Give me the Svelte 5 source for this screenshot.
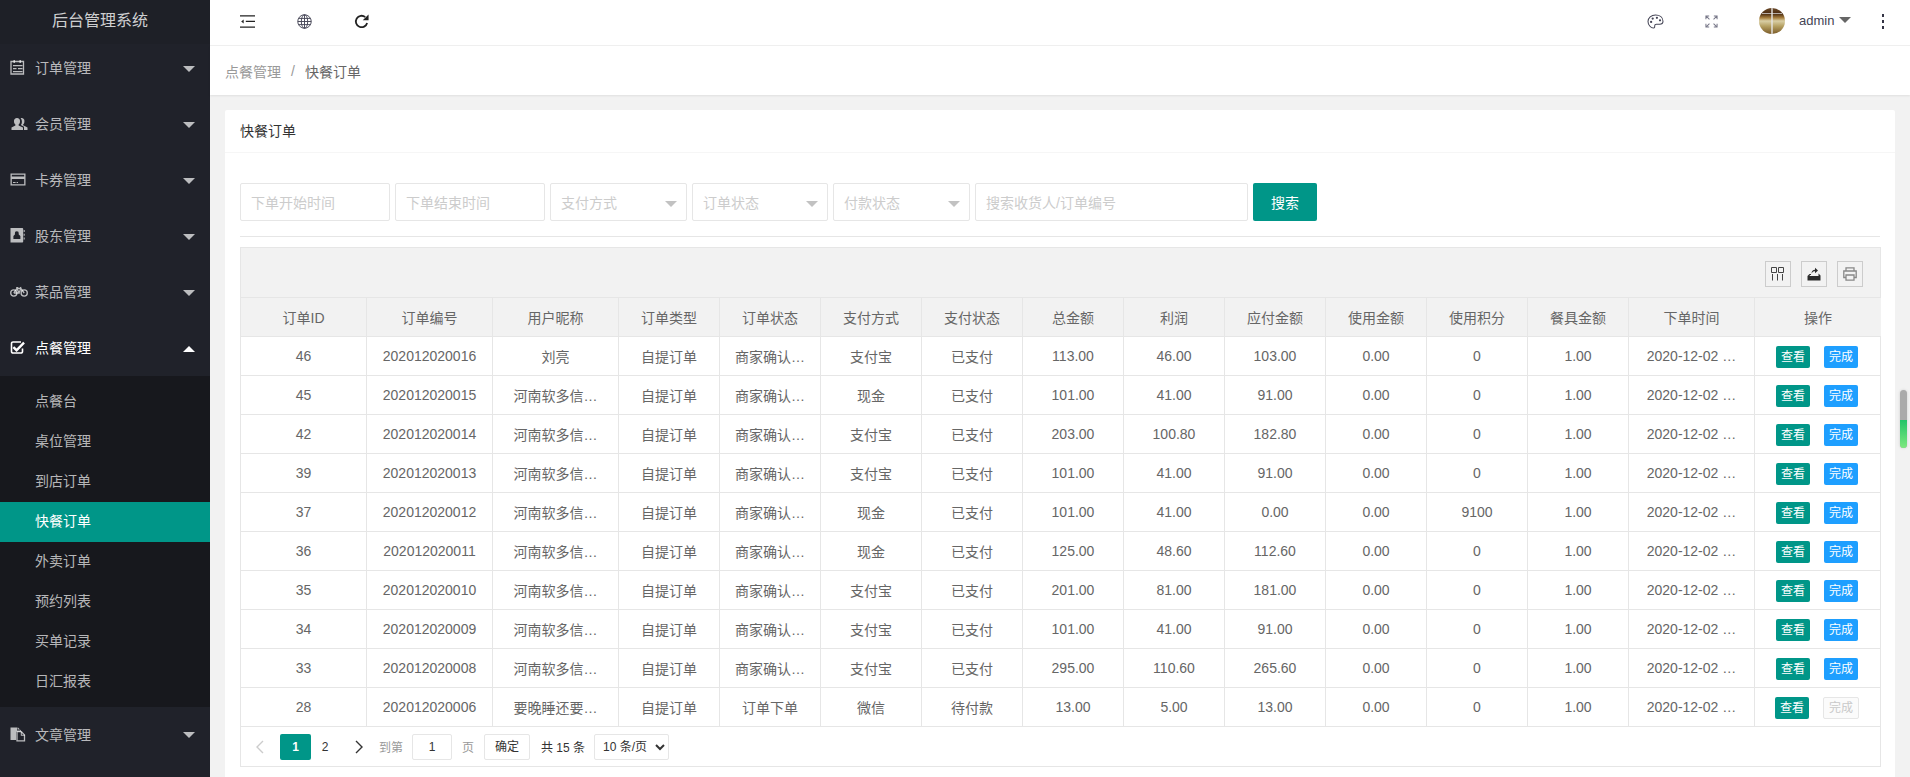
<script>
  const menu1 = [
    { label: '订单管理', icon: 'order' },
    { label: '会员管理', icon: 'users' },
    { label: '卡券管理', icon: 'card' },
    { label: '股东管理', icon: 'contact' },
    { label: '菜品管理', icon: 'bike' }
  ];
  const subs = ['点餐台', '桌位管理', '到店订单', '快餐订单', '外卖订单', '预约列表', '买单记录', '日汇报表'];
  const cols = ['订单ID','订单编号','用户昵称','订单类型','订单状态','支付方式','支付状态','总金额','利润','应付金额','使用金额','使用积分','餐具金额','下单时间','操作'];
  const s = '商家确认…';
  const rows = [
    [46,'202012020016','刘亮','自提订单',s,'支付宝','已支付','113.00','46.00','103.00','0.00','0','1.00'],
    [45,'202012020015','河南软多信…','自提订单',s,'现金','已支付','101.00','41.00','91.00','0.00','0','1.00'],
    [42,'202012020014','河南软多信…','自提订单',s,'支付宝','已支付','203.00','100.80','182.80','0.00','0','1.00'],
    [39,'202012020013','河南软多信…','自提订单',s,'支付宝','已支付','101.00','41.00','91.00','0.00','0','1.00'],
    [37,'202012020012','河南软多信…','自提订单',s,'现金','已支付','101.00','41.00','0.00','0.00','9100','1.00'],
    [36,'202012020011','河南软多信…','自提订单',s,'现金','已支付','125.00','48.60','112.60','0.00','0','1.00'],
    [35,'202012020010','河南软多信…','自提订单',s,'支付宝','已支付','201.00','81.00','181.00','0.00','0','1.00'],
    [34,'202012020009','河南软多信…','自提订单',s,'支付宝','已支付','101.00','41.00','91.00','0.00','0','1.00'],
    [33,'202012020008','河南软多信…','自提订单',s,'支付宝','已支付','295.00','110.60','265.60','0.00','0','1.00'],
    [28,'202012020006','要晚睡还要…','自提订单','订单下单','微信','待付款','13.00','5.00','13.00','0.00','0','1.00']
  ];
</script>

{#snippet sideIcon(name)}
  <svg class="side-icon" class:wide={name === 'users' || name === 'bike'} viewBox={name === 'users' || name === 'bike' ? '0 0 18 16' : '0 0 16 16'} aria-hidden="true">
    {#if name === 'order'}
      <path fill="none" stroke="currentColor" stroke-width="1.300" d="M1 2.500h12.500v12.500H1z"/>
      <path fill="currentColor" d="M3.500 1h1.400v3H3.500zM9.500 1h1.400v3H9.500zM3 6h9.500v1.200H3zM3 9h3.500v1.200H3zM8 9h4.500v1.200H8zM3 12h9.500v1.200H3z"/>
    {:else if name === 'users'}
      <path fill="currentColor" d="M7 3a3 3 0 0 1 3 3.400c0 1.300-.6 2.500-1.400 3.100v.9l4.400 2v2.600H1.500v-2.600l3.900-2v-.9C4.600 8.900 4 7.700 4 6.400A3 3 0 0 1 7 3z"/>
      <path fill="currentColor" d="M11.500 3a2.900 2.900 0 0 1 2.900 3.400c0 1.200-.5 2.400-1.300 3v.9l4.400 2.100V15H14v-3.300l-3.100-1.600c.6-.9 1-2 1-3.200 0-1.500-.4-2.800-1.300-3.700.3-.1.600-.2.900-.2z"/>
    {:else if name === 'card'}
      <path fill="currentColor" fill-rule="evenodd" d="M.5 2.500h15v12H.5zM1.800 3.800v1.800h12.400V3.800zM1.800 8v5.200h12.400V8z"/>
      <path fill="currentColor" d="M3 11h2.600v1H3zM6.600 11h1.400v1H6.600z"/>
    {:else if name === 'contact'}
      <path fill="currentColor" fill-rule="evenodd" d="M.5 1h11.800a.9.9 0 0 1 .9.900v12.700a.9.900 0 0 1-.9.900H.5zM6.800 4.200a1.900 1.900 0 0 0-1.900 2.200v1L3.400 9v3h7V9L8.700 7.400v-1a1.900 1.900 0 0 0-1.900-2.200z"/>
      <path fill="currentColor" d="M13.700 3h1v2h-1zM13.700 6.800h1v2h-1zM13.700 10.600h1v2h-1z"/>
    {:else if name === 'bike'}
      <g fill="none" stroke="currentColor" stroke-width="1.300">
        <circle cx="3.800" cy="10" r="3.100"/><circle cx="14.200" cy="10" r="3.100"/>
        <path d="M3.800 10 7 5.500h3.800L14.200 10M6.200 4.600h2M10.500 4l.4 1.700M7 5.500 9 10H3.800M10.800 5.800 9 10"/>
      </g>
    {:else if name === 'check'}
      <path fill="none" stroke="currentColor" stroke-width="1.600" d="M12.500 9.500v3a1.500 1.500 0 0 1-1.500 1.500H3a1.500 1.500 0 0 1-1.500-1.500v-8A1.500 1.500 0 0 1 3 3h8"/>
      <path fill="currentColor" d="M4.200 7.200 6.600 9.600l6.600-6.800 1.700 1.700-8.300 8.500-4.100-4.100z"/>
    {:else if name === 'docs'}
      <path fill="currentColor" d="M.5 1.500H7v3h3v-1l.1.100H7.500V1.500H8l3 3v1H6v8.500H.5z"/>
      <path fill="none" stroke="currentColor" stroke-width="1.300" d="M7 5.700h4.300l3.200 3.200v6H7z"/>
      <path fill="currentColor" d="M10.800 5.700h1v3h3v1h-4z"/>
    {/if}
  </svg>
{/snippet}

{#snippet caret(up = false)}
  <i class="caret" class:up></i>
{/snippet}

<div class="app">
  <aside class="side">
    <div class="logo">后台管理系统</div>
    <nav>
      {#each menu1 as m}
        <div class="nav-item">{@render sideIcon(m.icon)}<span>{m.label}</span>{@render caret()}</div>
      {/each}
      <div class="nav-item open">{@render sideIcon('check')}<span>点餐管理</span>{@render caret(true)}</div>
      <div class="subs">
        {#each subs as sub}
          <div class="sub" class:active={sub === '快餐订单'}>{sub}</div>
        {/each}
      </div>
      <div class="nav-item tail">{@render sideIcon('docs')}<span>文章管理</span>{@render caret()}</div>
    </nav>
  </aside>

  <div class="main">
    <header class="top">
      <div class="top-left">
        <svg class="ti menu" viewBox="0 0 15.500 13.100" aria-hidden="true">
          <path fill="#222" d="M0 0h15.500v1.300H0zM6 5.800h9.500v1.300H6zM0 11.800h15.500v1.300H0zM3.800 4.500v4L1.200 6.500z"/>
        </svg>
        <svg class="ti globe" viewBox="0 0 16 16" aria-hidden="true">
          <g fill="none" stroke="#445" stroke-width="1">
            <circle cx="8" cy="8" r="7.200"/><ellipse cx="8" cy="8" rx="3.400" ry="7.200"/>
            <path d="M8 .8v14.400M.8 8h14.400M1.800 4.700h12.400M1.800 11.300h12.400"/>
          </g>
        </svg>
        <svg class="ti" viewBox="0 0 16 16" aria-hidden="true">
          <path fill="none" stroke="#222" stroke-width="1.900" d="M14 9.500A6.100 6.100 0 1 1 12 3.300"/>
          <path fill="#222" d="M15.500.5v6.200H9.300z"/>
        </svg>
      </div>
      <div class="top-right">
        <svg class="palette" viewBox="0 0 18 16" aria-hidden="true">
          <path fill="none" stroke="#445" stroke-width="1.100" d="M9 1C4.500 1 1 4 1 8c0 3.500 3 7 5.800 7 1.700 0 1.300-1.600 1.300-2.300 0-1 .7-1.700 1.900-1.700h3.400c2 0 3.600-1 3.600-3.200C17 3.500 13.500 1 9 1z"/>
          <circle cx="4.300" cy="8.500" r="1.200" fill="#445"/><circle cx="6" cy="4.800" r="1.200" fill="#445"/><circle cx="10.500" cy="4" r="1.200" fill="#445"/><circle cx="13.800" cy="6.700" r="1.200" fill="#445"/>
        </svg>
        <svg class="expand" viewBox="0 0 14 14" aria-hidden="true">
          <path fill="none" stroke="#778" stroke-width="1.100" d="M1 4.500V1h3.500M1 1l3.800 3.800M13 4.500V1H9.500M13 1 9.200 4.800M1 9.500V13h3.500M1 13l3.800-3.800M13 9.500V13H9.500M13 13 9.200 9.200"/>
        </svg>
        <div class="avatar"><i class="v"></i><i class="h"></i></div>
        <span class="uname">admin</span>
        <i class="ucaret"></i>
        <div class="dots"><i></i><i></i><i></i></div>
      </div>
    </header>

    <div class="crumb"><span class="c1">点餐管理</span><span class="sep">/</span><span class="c2">快餐订单</span></div>

    <div class="body">
      <section class="card">
        <div class="card-h">快餐订单</div>
        <div class="card-b">
          <div class="filters">
            <div class="inp w150"><span>下单开始时间</span></div>
            <div class="inp w150"><span>下单结束时间</span></div>
            <div class="inp sel"><span>支付方式</span><i></i></div>
            <div class="inp sel narrow"><span>订单状态</span><i></i></div>
            <div class="inp sel"><span>付款状态</span><i></i></div>
            <div class="inp wide"><span>搜索收货人/订单编号</span></div>
            <button class="search">搜索</button>
          </div>
          <div class="divider"></div>
          <div class="tbl">
            <div class="toolbar">
              <div class="tool">
                <svg viewBox="0 0 14 14" aria-hidden="true"><path fill="none" stroke="#444" d="M.5.500h5v5h-5zM7.500.500h5v5h-5zM1.500 7v6.500M6.500 7v6.500M11.500 7v6.500"/></svg>
              </div>
              <div class="tool">
                <svg viewBox="0 0 14 14" aria-hidden="true"><path fill="#2b2b2b" d="M.5 9 2.500 7H4v1H3l-.5 1h9V6.500l2 2v5H.5z"/><path fill="#2b2b2b" d="M4.500 6.500c0-2.500 1.500-3.800 3.500-3.800V.8l3 2.700-3 2.700V4.300C6.500 4.300 5.500 4.800 4.500 6.500z"/></svg>
              </div>
              <div class="tool">
                <svg viewBox="0 0 14 14" aria-hidden="true"><path fill="none" stroke="#888" stroke-width="1.300" d="M3 4V.8h8V4M3 10.500H.8V4h12.400v6.500H11M3 8h8v5.200H3z"/></svg>
              </div>
            </div>
            <table>
              <colgroup>
                {#each cols as c, i}
                  <col class={i < 3 || i > 12 ? 'cw' : 'cn'} />
                {/each}
              </colgroup>
              <thead>
                <tr>{#each cols as c}<th>{c}</th>{/each}</tr>
              </thead>
              <tbody>
                {#each rows as r, ri}
                  <tr>
                    {#each r as v}<td>{v}</td>{/each}
                    <td>2020-12-02 …</td>
                    <td class="ops" class:last={ri === 9}>
                      <span class="btn teal">查看</span><span class="btn" class:blue={ri !== 9} class:off={ri === 9}>完成</span>
                    </td>
                  </tr>
                {/each}
              </tbody>
            </table>
            <div class="pager">
              <svg class="chev" viewBox="0 0 10 14" aria-hidden="true"><path fill="none" stroke="#ccc" stroke-width="1.400" d="M8 1 2 7l6 6"/></svg>
              <span class="pg cur">1</span>
              <span class="pg two">2</span>
              <svg class="chev next" viewBox="0 0 10 14" aria-hidden="true"><path fill="none" stroke="#333" stroke-width="1.400" d="m2 1 6 6-6 6"/></svg>
              <span class="lbl first">到第</span>
              <span class="num">1</span>
              <span class="lbl">页</span>
              <span class="ok">确定</span>
              <span class="total">共 15 条</span>
              <select class="limit"><option>10 条/页</option></select>
            </div>
          </div>
        </div>
      </section>
    </div>
  </div>

  <div class="scroll"><i></i></div>
</div>

<style>
  :global(body) { margin: 0; overflow: hidden; }
  :global(#app) { font-family: "Liberation Sans", "Noto Sans CJK SC", sans-serif; }
  .app { display: flex; width: 1910px; height: 777px; overflow: hidden; position: relative; font-size: 14px; color: #666; background: #f2f2f2; }

  .side { width: 210px; flex: none; background: linear-gradient(#1e2027 44px, #20222a 44px); color: rgba(255,255,255,.7); }
  .logo { height: 40px; line-height: 41px; text-align: center; font-size: 16px; color: rgba(255,255,255,.8); padding-right: 10px; }
  .nav-item { height: 56px; box-sizing: border-box; padding: 0 0 2px 10px; display: flex; align-items: center; position: relative; }
  .side-icon { width: 16px; height: 16px; flex: none; margin-right: 9px; }
  .side-icon.wide { width: 18px; margin-right: 7px; }
  .nav-item.open { color: #fff; }
  .caret { position: absolute; left: 183px; top: 26px; width: 0; height: 0; border: 6px solid transparent; border-top-color: rgba(255,255,255,.7); border-bottom: 0; }
  .caret.up { border-top: 0; border-bottom: 6px solid #fff; }
  .tail .caret { top: 25px; }
  .subs { background: #17181d; padding: 6px 0 5px; }
  .sub { height: 40px; line-height: 38px; padding-left: 35px; }
  .sub.active { background: #009688; color: #fff; }

  .main { width: 1700px; flex: none; display: flex; flex-direction: column; }
  .top { height: 46px; box-sizing: border-box; background: #fff; border-bottom: 1px solid #f0f0f0; display: flex; align-items: center; justify-content: space-between; flex: none; }
  .top-left { display: flex; align-items: center; gap: 42px; padding: 0 0 3px 30px; }
  .ti { width: 15px; height: 15px; display: block; }
  .ti.menu { height: 13px; }
  .top-right { display: flex; align-items: center; height: 100%; box-sizing: border-box; padding-bottom: 3px; }
  .palette { width: 17px; height: 15px; }
  .expand { width: 13px; height: 13px; margin-left: 41px; }
  .avatar { width: 26px; height: 26px; border-radius: 50%; margin-left: 41px; position: relative; overflow: hidden; background: linear-gradient(#6b4a2a 0, #4a2a10 22%, #a8803f 38%, #d9cfa6 50%, #b5a062 70%, #7a5a28 100%); }
  .avatar i { position: absolute; background: rgba(230,230,230,.7); }
  .avatar .v { left: 12px; top: 0; bottom: 0; width: 2px; }
  .avatar .h { left: 3px; right: 3px; top: 5px; height: 1px; }
  .uname { margin: -2px 0 0 14px; font-size: 13px; color: #445; width: 34px; }
  .ucaret { width: 0; height: 0; border: 6px solid transparent; border-top-color: #666; border-bottom: 0; margin: -3px 0 0 6px; }
  .dots { margin: 0 26px 0 31px; display: flex; flex-direction: column; gap: 3px; }
  .dots i { width: 2px; height: 3px; background: #334; }

  .crumb { height: 49px; flex: none; box-sizing: border-box; background: #fff; box-shadow: 0 1px 2px rgba(0,0,0,.08); display: flex; align-items: center; padding-left: 15px; }
  .c1 { color: #999; }
  .sep { color: #999; margin: 0 10px; }
  .body { padding: 15px 0 0 15px; flex: 1; min-height: 0; }
  .card { background: #fff; width: 1670px; height: 700px; border-radius: 2px; }
  .card-h { height: 42px; box-sizing: content-box; line-height: 43px; padding-left: 15px; border-bottom: 1px solid #f6f6f6; color: #333; font-size: 14px; }
  .card-b { padding: 30px 15px 0; }

  .filters { display: flex; gap: 5px; }
  .inp { height: 38px; box-sizing: border-box; border: 1px solid #e6e6e6; border-radius: 2px; padding-left: 10px; display: flex; align-items: center; color: #ccc; position: relative; }
  .w150 { width: 150px; }
  .sel { width: 137px; }
  .sel.narrow { width: 136px; }
  .sel i { position: absolute; right: 9px; top: 17px; width: 0; height: 0; border: 6px solid transparent; border-top-color: #c2c2c2; border-bottom: 0; }
  .wide { width: 273px; }
  .search { height: 38px; width: 64px; border: 0; padding: 0; border-radius: 2px; background: #009688; color: #fff; font: inherit; }
  .divider { height: 1px; background: #e6e6e6; margin: 15px 0 10px; }

  .tbl { border: 1px solid #e6e6e6; width: 1639px; box-sizing: content-box; }
  .toolbar { height: 49px; box-sizing: border-box; background: #f2f2f2; display: flex; justify-content: flex-end; align-items: flex-start; gap: 10px; padding: 13px 17px 0 0; }
  .tool { width: 26px; height: 26px; box-sizing: border-box; border: 1px solid #ccc; display: flex; align-items: center; justify-content: center; }
  .tool svg { width: 14px; height: 14px; }

  table { border-collapse: separate; border-spacing: 0; table-layout: fixed; width: 1639px; }
  .cw { width: 126px; }
  .cn { width: 101px; }
  th, td { height: 39px; padding: 0 5px; box-sizing: border-box; border-top: 1px solid #e6e6e6; border-right: 1px solid #e6e6e6; font-weight: 400; color: #666; font-size: 14px; text-align: center; white-space: nowrap; overflow: hidden; }
  th { background: #f2f2f2; }
  th:last-child, td:last-child { border-right: 0; }
  td.ops { padding: 1px 0 0 21px; text-align: left; }
  td.ops.last { padding-left: 20px; }
  .btn { display: inline-block; width: 34px; height: 22px; line-height: 22px; border-radius: 2px; font-size: 12px; text-align: center; color: #fff; vertical-align: middle; }
  .btn + .btn { margin-left: 14px; }
  .teal { background: #009688; }
  .blue { background: #1e9fff; }
  .off { background: #fbfbfb; border: 1px solid #e6e6e6; color: #c9c9c9; box-sizing: border-box; width: 36px; line-height: 20px; }

  .pager { height: 40px; box-sizing: border-box; border-top: 1px solid #e6e6e6; display: flex; align-items: center; padding-left: 14px; font-size: 12px; color: #333; }
  .chev { width: 10px; height: 14px; flex: none; }
  .next { margin-left: 15px; }
  .pg { height: 26px; line-height: 26px; text-align: center; }
  .pg.two { width: 28px; }
  .pg.cur { width: 31px; background: #009688; color: #fff; border-radius: 2px; font-weight: 700; margin-left: 15px; }
  .lbl { color: #999; margin: 0 10px; }
  .lbl.first { margin: 0 9px 0 15px; }
  .num { width: 40px; height: 26px; line-height: 24px; box-sizing: border-box; border: 1px solid #e6e6e6; border-radius: 2px; text-align: center; flex: none; }
  .ok { width: 46px; height: 26px; line-height: 24px; box-sizing: border-box; border: 1px solid #e6e6e6; border-radius: 2px; text-align: center; flex: none; }
  .total { margin-left: 11px; width: 44px; white-space: nowrap; }
  .limit { width: 75px; height: 26px; margin-left: 9px; box-sizing: border-box; border: 1px solid #e6e6e6; border-radius: 2px; background: #fff; color: #333; font: inherit; padding-left: 4px; }

  .scroll { position: absolute; left: 1900px; top: 390px; width: 7px; height: 58px; border-radius: 4px; background: #aaa; box-shadow: 0 0 3px rgba(0,0,0,.15); overflow: hidden; }
  .scroll i { position: absolute; left: 0; right: 0; top: 30px; bottom: 0; background: linear-gradient(#22c468, #7ee87f); }
</style>
